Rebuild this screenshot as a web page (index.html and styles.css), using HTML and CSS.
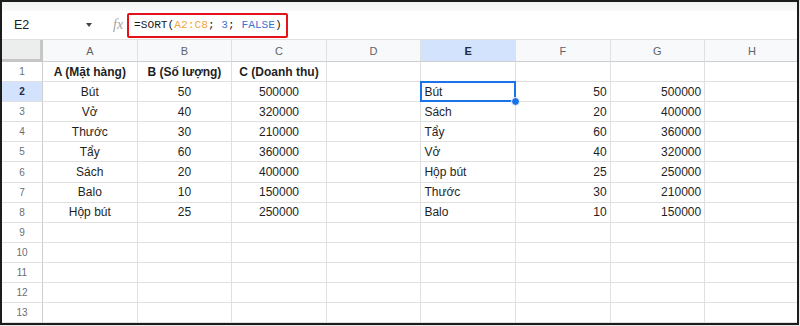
FILE: index.html
```html
<!DOCTYPE html>
<html>
<head>
	<meta charset="utf-8">
	<title>SORT</title>
	<link rel="stylesheet" href="styles.css">
</head>
<body>
	<div class="frame">
		<div class="top-band"></div>
		<div class="formula-bar">
			<div class="name-box">
				<span>E2</span>
				<span class="caret"></span>
			</div>
			<span class="fx">fx</span>
			<div class="formula">=SORT(<span class="range">A2:C8</span>; <span class="lit">3</span>; <span class="lit">FALSE</span>)</div>
		</div>

		<div class="sheet">
			<!-- column headers -->
			<div class="corner"></div>
			<div class="col-head">A</div>
			<div class="col-head">B</div>
			<div class="col-head">C</div>
			<div class="col-head">D</div>
			<div class="col-head active">E</div>
			<div class="col-head">F</div>
			<div class="col-head">G</div>
			<div class="col-head">H</div>

			<div class="row-head">1</div>
			<div class="cell c b">A (Mặt hàng)</div>
			<div class="cell c b">B (Số lượng)</div>
			<div class="cell c b">C (Doanh thu)</div>
			<div class="cell"></div><div class="cell"></div><div class="cell"></div><div class="cell"></div><div class="cell"></div>

			<div class="row-head active">2</div>
			<div class="cell c">Bút</div>
			<div class="cell c">50</div>
			<div class="cell c">500000</div>
			<div class="cell"></div>
			<div class="cell selected">Bút<span class="handle"></span></div>
			<div class="cell r">50</div>
			<div class="cell r">500000</div>
			<div class="cell"></div>

			<div class="row-head">3</div>
			<div class="cell c">Vở</div>
			<div class="cell c">40</div>
			<div class="cell c">320000</div>
			<div class="cell"></div>
			<div class="cell">Sách</div>
			<div class="cell r">20</div>
			<div class="cell r">400000</div>
			<div class="cell"></div>

			<div class="row-head">4</div>
			<div class="cell c">Thước</div>
			<div class="cell c">30</div>
			<div class="cell c">210000</div>
			<div class="cell"></div>
			<div class="cell">Tẩy</div>
			<div class="cell r">60</div>
			<div class="cell r">360000</div>
			<div class="cell"></div>

			<div class="row-head">5</div>
			<div class="cell c">Tẩy</div>
			<div class="cell c">60</div>
			<div class="cell c">360000</div>
			<div class="cell"></div>
			<div class="cell">Vở</div>
			<div class="cell r">40</div>
			<div class="cell r">320000</div>
			<div class="cell"></div>

			<div class="row-head">6</div>
			<div class="cell c">Sách</div>
			<div class="cell c">20</div>
			<div class="cell c">400000</div>
			<div class="cell"></div>
			<div class="cell">Hộp bút</div>
			<div class="cell r">25</div>
			<div class="cell r">250000</div>
			<div class="cell"></div>

			<div class="row-head">7</div>
			<div class="cell c">Balo</div>
			<div class="cell c">10</div>
			<div class="cell c">150000</div>
			<div class="cell"></div>
			<div class="cell">Thước</div>
			<div class="cell r">30</div>
			<div class="cell r">210000</div>
			<div class="cell"></div>

			<div class="row-head">8</div>
			<div class="cell c">Hộp bút</div>
			<div class="cell c">25</div>
			<div class="cell c">250000</div>
			<div class="cell"></div>
			<div class="cell">Balo</div>
			<div class="cell r">10</div>
			<div class="cell r">150000</div>
			<div class="cell"></div>

			<div class="row-head">9</div>
			<div class="cell"></div><div class="cell"></div><div class="cell"></div><div class="cell"></div><div class="cell"></div><div class="cell"></div><div class="cell"></div><div class="cell"></div>
			<div class="row-head">10</div>
			<div class="cell"></div><div class="cell"></div><div class="cell"></div><div class="cell"></div><div class="cell"></div><div class="cell"></div><div class="cell"></div><div class="cell"></div>
			<div class="row-head">11</div>
			<div class="cell"></div><div class="cell"></div><div class="cell"></div><div class="cell"></div><div class="cell"></div><div class="cell"></div><div class="cell"></div><div class="cell"></div>
			<div class="row-head">12</div>
			<div class="cell"></div><div class="cell"></div><div class="cell"></div><div class="cell"></div><div class="cell"></div><div class="cell"></div><div class="cell"></div><div class="cell"></div>
			<div class="row-head">13</div>
			<div class="cell"></div><div class="cell"></div><div class="cell"></div><div class="cell"></div><div class="cell"></div><div class="cell"></div><div class="cell"></div><div class="cell"></div>
		</div>
	</div>
</body>
</html>
```

FILE: styles.css
```css
body {
	margin: 0;
	background: #e9e9e9;
	font-family: "Liberation Sans", Arial, sans-serif;
	color: #1f1f1f;
}

.frame {
	width: 799px;
	height: 325px;
	box-sizing: border-box;
	border: 2px solid #1c1c1c;
	background: #fff;
	overflow: hidden;
}

.top-band {
	height: 9px;
	background: linear-gradient(#f1f2f3, #f9fafa);
}

/* formula bar */
.formula-bar {
	height: 29px;
	box-sizing: border-box;
	border-bottom: 1px solid #e1e1e1;
	display: flex;
	align-items: center;
}
.name-box {
	width: 78px;
	padding-left: 12px;
	display: flex;
	align-items: center;
	font-size: 12.5px;
	color: #202124;
}
.caret {
	margin-left: auto;
	width: 0;
	height: 0;
	border-left: 3.5px solid transparent;
	border-right: 3.5px solid transparent;
	border-top: 4px solid #444;
}
.fx {
	margin-left: 21px;
	width: 14px;
	font-family: "Liberation Serif", serif;
	font-style: italic;
	font-size: 14px;
	color: #a4a4a4;
}
.formula {
	height: 25px;
	box-sizing: border-box;
	border: 2px solid #e5121b;
	border-radius: 2px;
	padding: 0 4px 0 5px;
	display: flex;
	align-items: center;
	font-family: "Liberation Mono", monospace;
	font-size: 11.2px;
	color: #1a1a1a;
	white-space: pre;
}
.range {
	color: #f2a33a;
}
.lit {
	color: #3a73cf;
}

/* grid */
.sheet {
	display: grid;
	grid-template-columns: 41px repeat(8, 94.6px);
	grid-template-rows: 22px;
	grid-auto-rows: 20.1px;
	font-size: 12px;
}
.sheet > div {
	box-sizing: border-box;
	border-right: 1px solid #e0e0e0;
	border-bottom: 1px solid #e0e0e0;
	display: flex;
	align-items: center;
	white-space: nowrap;
	overflow: hidden;
}
.corner {
	background: #eceded;
	border-right: 3px solid #c6c6c6 !important;
	border-bottom: 3px solid #c6c6c6 !important;
}
.col-head {
	background: #f8f9fa;
	justify-content: center;
	font-size: 11px;
	color: #5f6368;
	border-bottom-color: #cfcfcf !important;
}
.row-head {
	justify-content: center;
	font-size: 10px;
	color: #6b6e72;
	border-right-color: #cfcfcf !important;
}
.col-head.active,
.row-head.active {
	background: #d3e3fd;
	color: #1f2a44;
	font-weight: bold;
}

.cell {
	padding: 0 3px;
	color: #1f1f1f;
}
.cell.c {
	justify-content: center;
}
.cell.r {
	justify-content: flex-end;
}
.cell.b {
	font-weight: bold;
}

.sheet > .selected {
	position: relative;
	overflow: visible;
}
.selected::after {
	content: "";
	position: absolute;
	top: -1px;
	left: -1px;
	right: -1px;
	bottom: -1px;
	border: 2px solid #1a73e8;
}
.handle {
	position: absolute;
	right: -5px;
	bottom: -5px;
	width: 7px;
	height: 7px;
	border-radius: 50%;
	background: #1a73e8;
	border: 1px solid #fff;
	z-index: 2;
}
```
